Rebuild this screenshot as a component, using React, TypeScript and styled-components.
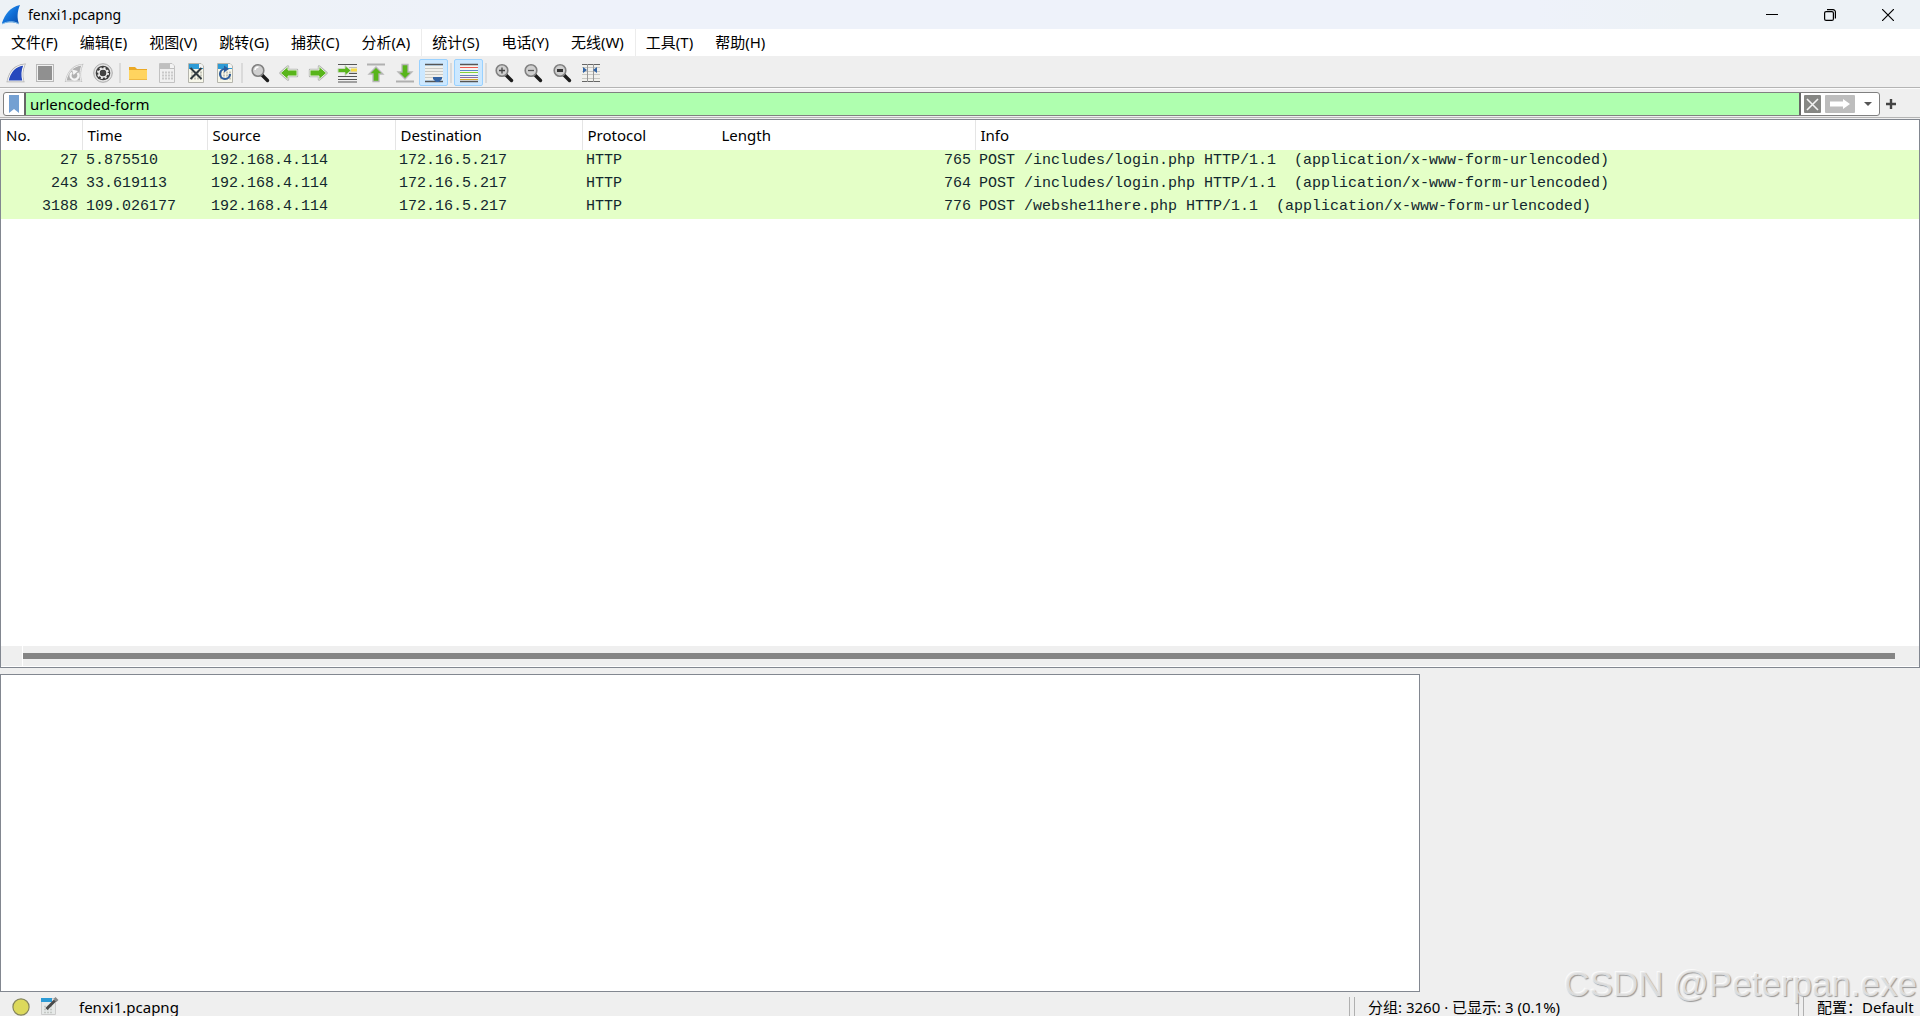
import React from "react";
import styled, { createGlobalStyle, css } from "styled-components";

const UI_FONT = `"Noto Sans", "Noto Sans CJK SC", sans-serif`;
const MONO_FONT = `"Liberation Mono", "DejaVu Sans Mono", monospace`;

const GlobalStyle = createGlobalStyle`
  *, *::before, *::after { box-sizing: border-box; }
  body { margin: 0; background: #efefef; color: #000; font: 15px/20px ${UI_FONT}; overflow: hidden; }
  button, input { font: inherit; color: inherit; margin: 0; }
  button { border: 0; background: none; padding: 0; }
  svg { display: block; flex: none; }
`;

const Window = styled.div`
  position: relative;
  display: flex;
  flex-direction: column;
  height: 100vh;
  overflow: hidden;
`;

const TitleBar = styled.header`
  display: flex;
  align-items: center;
  height: 29px;
  flex: none;
  padding-right: 3px;
  background: linear-gradient(90deg, #edf2f6 0, #eef2fa 30%, #eef2fa 80%, #edf2f6 88%);
`;

const WindowTitle = styled.h1`
  flex: 1;
  margin: 0 0 0 6px;
  font-size: 14px;
  line-height: 20px;
  font-weight: 400;
`;

const CaptionButton = styled.button`
  display: flex;
  align-items: center;
  justify-content: center;
  width: 58px;
  height: 28px;
`;

const MenuBar = styled.nav`
  display: flex;
  height: 27px;
  flex: none;
  background: #fff;
`;

const MenuButton = styled.button<{ $divided?: boolean }>`
  padding: 0 11px 2px 10px;
  white-space: nowrap;
  border-left: 1px solid ${(p) => (p.$divided ? "#ececec" : "transparent")};
`;

const ToolBar = styled.div`
  display: flex;
  align-items: center;
  height: 32px;
  flex: none;
  padding: 2px 1px 0;
  border-bottom: 1px solid #b4b4b4;
`;

const ToolButton = styled.button<{ $checked?: boolean }>`
  display: flex;
  align-items: center;
  justify-content: center;
  width: 29px;
  height: 27px;
  border: 1px solid transparent;
  border-radius: 2px;
  ${(p) =>
    p.$checked &&
    css`
      background: #cce8ff;
      border-color: #99d1ff;
    `}
`;

const ToolSeparator = styled.span`
  width: 2px;
  height: 20px;
  margin: 0 2px;
  background: #dadada;
`;

const FilterBar = styled.form`
  display: flex;
  align-items: center;
  height: 30px;
  flex: none;
  padding: 2px 18px 0 3px;
  border-top: 1px solid #fbfbfb;
  border-bottom: 1px solid #b4b4b4;
`;

const FilterBox = styled.div`
  display: flex;
  flex: 1;
  height: 24px;
  background: #fff;
  border: 1px solid #808080;
  border-radius: 3px;
  overflow: hidden;
`;

const BookmarkButton = styled.button`
  display: flex;
  align-items: center;
  justify-content: center;
  width: 20px;
`;

const FilterInput = styled.input`
  flex: 1;
  min-width: 0;
  padding: 0 4px;
  border: solid #666;
  border-width: 0 2px;
  border-radius: 0;
  background: #afffaf;
  outline: none;
`;

const FilterActions = styled.div`
  display: flex;
  align-items: center;
  gap: 4px;
  padding: 0 3px;
`;

const ActionButton = styled.button<{ $width: number; $bg?: string }>`
  display: flex;
  align-items: center;
  justify-content: center;
  width: ${(p) => p.$width}px;
  height: 18px;
  border-radius: 1px;
  background: ${(p) => p.$bg ?? "none"};
`;

const AddFilterButton = styled.button`
  display: flex;
  align-items: center;
  justify-content: center;
  width: 22px;
  height: 24px;
`;

const Panes = styled.main`
  display: flex;
  flex-direction: column;
  gap: 6px;
  flex: 1;
  min-height: 0;
  padding-top: 1px;
`;

const PacketPane = styled.section`
  display: flex;
  flex-direction: column;
  justify-content: space-between;
  flex: 547 1 0;
  min-height: 0;
  overflow: hidden;
  background: #fff;
  border: 1px solid #828790;
`;

const DetailsRow = styled.div`
  display: grid;
  grid-template-columns: 71fr 25fr;
  flex: 318 1 0;
  min-height: 0;
`;

const DetailsPane = styled.section`
  background: #fff;
  border: 1px solid #828790;
`;

const PacketTable = styled.table`
  width: 100%;
  table-layout: fixed;
  border-collapse: collapse;
`;

const Column = styled.col<{ $width?: number }>`
  width: ${(p) => (p.$width ? `${p.$width}px` : "auto")};
`;

const HeadCell = styled.th<{ $divided?: boolean }>`
  height: 30px;
  padding: 0 5px;
  font-weight: 400;
  text-align: left;
  border-right: 1px solid ${(p) => (p.$divided ? "#e5e5e5" : "transparent")};
`;

const PacketRow = styled.tr`
  background: #e4ffc7;
  color: #12272e;
`;

const Cell = styled.td<{ $end?: boolean }>`
  height: 23px;
  padding: 0 4px 1px;
  font: 15px/20px ${MONO_FONT};
  text-align: ${(p) => (p.$end ? "right" : "left")};
  white-space: pre;
`;

const ScrollBar = styled.div`
  display: flex;
  align-items: center;
  height: 21px;
  padding-right: 24px;
  background: #efefef;
  border-bottom: 1px solid #fff;
`;

const ScrollStep = styled.span`
  width: 22px;
  height: 20px;
  border-right: 1px solid #fff;
`;

const ScrollThumb = styled.span`
  flex: 1;
  height: 6px;
  background: #858585;
`;

const StatusBar = styled.footer`
  display: flex;
  height: 24px;
  flex: none;
  padding-top: 5px;
  overflow: hidden;
`;

const StatusIcons = styled.div`
  display: flex;
  gap: 10px;
  width: 79px;
  padding: 0 0 0 12px;
`;

const StatusButton = styled.button`
  height: 20px;
`;

const FileName = styled.span`
  flex: 1;
`;

const StatusText = styled.span<{ $width: number }>`
  width: ${(p) => p.$width}px;
  padding-left: 13px;
  white-space: nowrap;
`;

const Grip = styled.span`
  width: 6px;
  height: 20px;
  border: solid #b0b0b0;
  border-width: 0 1px;
`;

const Watermark = styled.div`
  position: absolute;
  right: 3px;
  bottom: 12px;
  font: 35px/40px "Liberation Sans", Arial, sans-serif;
  color: rgba(232, 232, 232, 0.85);
  text-shadow: 1px 1px 1px #999, -1px -1px 0 #fafafa;
  pointer-events: none;
  white-space: nowrap;
`;

const Svg = ({ size = 20, children }: { size?: number; children: React.ReactNode }) => (
  <svg width={size} height={size} viewBox="0 0 20 20" fill="none" aria-hidden="true">
    {children}
  </svg>
);

const FIN = "M2 18C4 9 9 3 18 2C15.500 8 15.500 13 17 18Z";

const AppFin = () => (
  <svg width="22" height="22" viewBox="0 0 22 22" aria-hidden="true">
    <defs>
      <linearGradient id="appfin" x1="0" y1="0" x2="1" y2="1">
        <stop offset="0" stopColor="#39a6f5" />
        <stop offset="0.5" stopColor="#1170d8" />
        <stop offset="1" stopColor="#0a4aa5" />
      </linearGradient>
    </defs>
    <path d="M2 19C5 10 10 3 20 1C17 8 17 14 19 20C13 17.500 8 17.500 2 20Z" fill="url(#appfin)" />
    <path d="M2 20C8 17 14 17 19 20" stroke="#8fc6ee" fill="none" />
  </svg>
);

const StartIcon = () => (
  <Svg>
    <path d={FIN} fill="#f4f4f4" stroke="#a9a9a9" strokeWidth="2.400" />
    <path d={FIN} fill="#2648bd" stroke="#f4f4f4" strokeWidth="1.200" />
  </Svg>
);

const StopIcon = () => (
  <Svg>
    <rect x="1.500" y="1.500" width="17" height="17" fill="#f0f0f0" stroke="#b8b8b8" />
    <rect x="3" y="3" width="14" height="14" fill="#909090" />
  </Svg>
);

const RestartIcon = () => (
  <Svg>
    <path d={FIN} fill="#b7b7b7" stroke="#c4c4c4" strokeWidth="2" />
    <path d={FIN} fill="#b0b0b0" stroke="#eee" strokeWidth="1" />
    <path d="M8 9.500A4 4 0 1 0 13.500 10" stroke="#f5f5f5" strokeWidth="2.200" />
    <path d="M8 6.500L14 8L9.500 12Z" fill="#f5f5f5" />
  </Svg>
);

const OptionsIcon = () => (
  <Svg>
    <circle cx="10" cy="10" r="9.300" fill="#e4e4e4" stroke="#aaa" />
    <circle cx="10" cy="10" r="7.300" fill="#3d3d3d" />
    <circle cx="10" cy="10" r="4" stroke="#eee" strokeWidth="1.500" />
    <circle cx="10" cy="10" r="5" stroke="#eee" strokeWidth="2" strokeDasharray="1.963 1.963" />
    <circle cx="10" cy="10" r="2.800" fill="#444" />
  </Svg>
);

const FolderIcon = () => (
  <Svg>
    <path d="M1 4H7L9 6H19V17H1Z" fill="#eba925" />
    <path d="M1 7H19V17H1Z" fill="#ffd45f" />
    <path d="M1 16.500H19" stroke="#efb943" />
  </Svg>
);

const FileIcon = ({ kind }: { kind: "save" | "close" | "reload" }) => {
  const on = kind !== "save";
  return (
    <Svg>
      <path d="M2.500 0.500H15L17.500 3V19.500H2.500Z" fill={on ? "#f7f7ea" : "#f0f0f0"} stroke={on ? "#b5b5ad" : "#c2c2c2"} />
      <path d="M3 1H14L17 4V6H3Z" fill={on ? "#2d9bd6" : "#bfbfbf"} />
      <path d="M13 1H15L17 3V5H13Z" fill="#f3f3f3" />
      <path d="M5 9.500H16M5 12.500H16M5 15.500H16" stroke={on ? "#c3c3b8" : "#c9c9c9"} strokeWidth="2" strokeDasharray="2 1" />
      {kind === "close" && <path d="M4.500 5L15.500 16M15.500 5L4.500 16" stroke="#303a40" strokeWidth="2" />}
      {kind === "reload" && (
        <>
          <path d="M15 11A5 5 0 1 1 10 6" stroke="#2c5c9c" strokeWidth="2.200" />
          <path d="M9 2.500L14 6L9 9.500Z" fill="#2c5c9c" />
        </>
      )}
    </Svg>
  );
};

const LensIcon = ({ mark }: { mark?: "plus" | "minus" | "one" }) => (
  <Svg>
    <path d="M12 12L17.500 17.500" stroke="#1c1c1c" strokeWidth="3.400" strokeLinecap="round" />
    <circle cx="8" cy="7.500" r="5.800" fill="#cfcfcf" stroke="#808080" strokeWidth="1.600" />
    {!mark && <path d="M5 7A3.500 3.500 0 0 1 8.500 4" stroke="#fff" strokeWidth="1.500" />}
    {mark === "plus" && <path d="M5 7.500H11M8 4.500V10.500" stroke="#444" strokeWidth="1.300" />}
    {mark === "minus" && <path d="M5 7.500H11" stroke="#555" strokeWidth="1.300" />}
    {mark === "one" && <path d="M5 7.500H11" stroke="#333" strokeWidth="3" />}
  </Svg>
);

const ARROW = "M1.500 10L9 3.500V7H18V13H9V16.500Z";

const ArrowIcon = ({ turn = 0 }: { turn?: number }) => (
  <Svg>
    <g transform={`rotate(${turn} 10 10)`}>
      <path d={ARROW} fill="#eee" stroke="#b3b3b3" strokeWidth="2.400" strokeLinejoin="round" />
      <path d={ARROW} fill="#58b51b" stroke="#e4efdc" strokeWidth="1" />
    </g>
  </Svg>
);

const GoToIcon = () => (
  <Svg>
    <path d="M1 1.500H20M1 13.500H20M1 16.500H20M1 19H20M12 10.500H20" stroke="#555" strokeWidth="1.200" />
    <path d="M12 4.500H20M12 9H20" stroke="#bbb" />
    <path d="M14 7H20" stroke="#f6dc45" strokeWidth="3" />
    <path d="M1 5.500H8V2.500L14 7.500L8 12.500V9.500H1Z" fill="#58b51b" stroke="#c9d8c0" />
  </Svg>
);

const EdgeArrowIcon = ({ down = false }: { down?: boolean }) => (
  <Svg>
    {down ? (
      <>
        <path d="M1 18.500H19" stroke="#b0b0b0" strokeWidth="2" />
        <path d="M10 16L17 9H13V1.500H7V9H3Z" fill="#58b51b" stroke="#b8b8b8" strokeWidth="1.300" />
      </>
    ) : (
      <>
        <path d="M1 1.500H19" stroke="#b0b0b0" strokeWidth="2" />
        <path d="M10 4L17 11H13V18.500H7V11H3Z" fill="#58b51b" stroke="#b8b8b8" strokeWidth="1.300" />
      </>
    )}
  </Svg>
);

const AutoScrollIcon = () => (
  <Svg>
    <path d="M1 1.500H19M1 18.500H19" stroke="#555" strokeWidth="1.300" />
    <path d="M1 3H19V17H1Z" fill="#f0f0ec" />
    <path d="M1 5.500H19M1 8.500H19M1 11.500H19M1 14.500H19" stroke="#c9c9c4" />
    <path d="M9 14H18V16L15 19H12L9 16Z" fill="#3465a4" />
  </Svg>
);

const ColorizeIcon = () => (
  <Svg>
    <path d="M1 1H19V19H1Z" fill="#f5f5f2" />
    <path d="M1 1.500H19M1 18.500H19" stroke="#555" strokeWidth="1.300" />
    <path d="M1 4.500H19" stroke="#ee5b50" />
    <path d="M1 7.500H19" stroke="#5b8bc6" />
    <path d="M1 9.500H19" stroke="#83d33c" />
    <path d="M1 12.500H19" stroke="#6583bb" />
    <path d="M1 14.500H19" stroke="#8a6aa3" />
    <path d="M1 16.500H19" stroke="#d3a72e" />
  </Svg>
);

const ResizeIcon = () => (
  <Svg>
    <path d="M1 1H19V19H1Z" fill="#f1f1ed" />
    <path d="M1 4.500H19M1 8.500H19M1 11.500H19M1 15.500H19" stroke="#c9c9c4" />
    <path d="M1 1.500H19M1 18.500H19" stroke="#666" />
    <path d="M6.500 1V19M12.500 1V19" stroke="#999" />
    <path d="M2 4V10L6 7ZM16 4L12 7L16 10Z" fill="#3465a4" />
  </Svg>
);

const NoteIcon = () => (
  <Svg>
    <path d="M1.500 1.500H15.500V17.500H1.500Z" fill="#e6e9e8" stroke="#ccc" />
    <path d="M1 1H12V5H1Z" fill="#2d9bd6" />
    <path d="M4 9.500H13M4 12.500H13M4 15.500H13" stroke="#c4c8c4" strokeDasharray="2 1" strokeWidth="1.500" />
    <path d="M6.500 12L15 3.500" stroke="#4a4a4a" strokeWidth="3" />
    <path d="M15 3.500L17 1.500" stroke="#888" strokeWidth="4" />
  </Svg>
);

type Tool = { label: string; icon: React.ReactNode; checked?: boolean };

const TOOL_GROUPS: Tool[][] = [
  [
    { label: "开始捕获", icon: <StartIcon /> },
    { label: "停止捕获", icon: <StopIcon /> },
    { label: "重新开始捕获", icon: <RestartIcon /> },
    { label: "捕获选项", icon: <OptionsIcon /> },
  ],
  [
    { label: "打开", icon: <FolderIcon /> },
    { label: "保存", icon: <FileIcon kind="save" /> },
    { label: "关闭", icon: <FileIcon kind="close" /> },
    { label: "重新加载", icon: <FileIcon kind="reload" /> },
  ],
  [
    { label: "查找分组", icon: <LensIcon /> },
    { label: "前一分组", icon: <ArrowIcon /> },
    { label: "后一分组", icon: <ArrowIcon turn={180} /> },
    { label: "转到分组", icon: <GoToIcon /> },
    { label: "首个分组", icon: <EdgeArrowIcon /> },
    { label: "最新分组", icon: <EdgeArrowIcon down /> },
    { label: "自动滚动", icon: <AutoScrollIcon />, checked: true },
  ],
  [{ label: "着色", icon: <ColorizeIcon />, checked: true }],
  [
    { label: "放大", icon: <LensIcon mark="plus" /> },
    { label: "缩小", icon: <LensIcon mark="minus" /> },
    { label: "正常大小", icon: <LensIcon mark="one" /> },
    { label: "调整列宽", icon: <ResizeIcon /> },
  ],
];

const MENUS = [
  { text: "文件(F)" },
  { text: "编辑(E)" },
  { text: "视图(V)" },
  { text: "跳转(G)" },
  { text: "捕获(C)" },
  { text: "分析(A)" },
  { text: "统计(S)", divided: true },
  { text: "电话(Y)" },
  { text: "无线(W)" },
  { text: "工具(T)", divided: true },
  { text: "帮助(H)" },
];

const COLUMNS = [
  { name: "No.", width: 81, divided: true, end: true },
  { name: "Time", width: 125, divided: true },
  { name: "Source", width: 188, divided: true },
  { name: "Destination", width: 187, divided: true },
  { name: "Protocol", width: 134 },
  { name: "Length", width: 259, divided: true, end: true },
  { name: "Info" },
];

const PACKETS = [
  ["27", "5.875510", "192.168.4.114", "172.16.5.217", "HTTP", "765", "POST /includes/login.php HTTP/1.1  (application/x-www-form-urlencoded)"],
  ["243", "33.619113", "192.168.4.114", "172.16.5.217", "HTTP", "764", "POST /includes/login.php HTTP/1.1  (application/x-www-form-urlencoded)"],
  ["3188", "109.026177", "192.168.4.114", "172.16.5.217", "HTTP", "776", "POST /webshe11here.php HTTP/1.1  (application/x-www-form-urlencoded)"],
];

export default function App() {
  return (
    <Window>
      <GlobalStyle />
      <TitleBar>
        <AppFin />
        <WindowTitle>fenxi1.pcapng</WindowTitle>
        <CaptionButton aria-label="最小化">
          <svg width="12" height="12" viewBox="0 0 12 12"><path d="M0 5.500H12" stroke="#000" /></svg>
        </CaptionButton>
        <CaptionButton aria-label="还原">
          <svg width="12" height="12" viewBox="0 0 12 12" fill="none" stroke="#000" strokeWidth="1.200">
            <rect x="0.600" y="2.600" width="8.800" height="8.800" rx="1.500" />
            <path d="M3 0.600H9A2.400 2.400 0 0 1 11.400 3V9.500" />
          </svg>
        </CaptionButton>
        <CaptionButton aria-label="关闭窗口">
          <svg width="12" height="12" viewBox="0 0 12 12"><path d="M0 0L12 12M12 0L0 12" stroke="#000" strokeWidth="1.200" /></svg>
        </CaptionButton>
      </TitleBar>

      <MenuBar>
        {MENUS.map((m) => (
          <MenuButton key={m.text} $divided={m.divided}>{m.text}</MenuButton>
        ))}
      </MenuBar>

      <ToolBar role="toolbar">
        {TOOL_GROUPS.map((group, i) => (
          <React.Fragment key={i}>
            {i > 0 && <ToolSeparator />}
            {group.map((t) => (
              <ToolButton key={t.label} aria-label={t.label} $checked={t.checked}>{t.icon}</ToolButton>
            ))}
          </React.Fragment>
        ))}
      </ToolBar>

      <FilterBar onSubmit={(e) => e.preventDefault()}>
        <FilterBox>
          <BookmarkButton type="button" aria-label="书签">
            <svg width="12" height="18" viewBox="0 0 12 18"><path d="M1 0H11V18L6 14L1 18Z" fill="#74a0d2" /></svg>
          </BookmarkButton>
          <FilterInput aria-label="显示过滤器" defaultValue="urlencoded-form" spellCheck={false} />
          <FilterActions>
            <ActionButton type="button" aria-label="清除" $width={17} $bg="#868784">
              <svg width="13" height="13" viewBox="0 0 13 13"><path d="M1 1L12 12M12 1L1 12" stroke="#f2f2f2" strokeWidth="1.600" /></svg>
            </ActionButton>
            <ActionButton type="submit" aria-label="应用" $width={30} $bg="#bdbdbd">
              <svg width="20" height="10" viewBox="0 0 20 10"><path d="M0 2.500H13V0L20 5L13 10V7.500H0Z" fill="#fff" /></svg>
            </ActionButton>
            <ActionButton type="button" aria-label="历史记录" $width={17}>
              <svg width="8" height="4" viewBox="0 0 8 4"><path d="M0 0H8L4 4Z" fill="#555" /></svg>
            </ActionButton>
          </FilterActions>
        </FilterBox>
        <AddFilterButton type="button" aria-label="添加过滤器">
          <svg width="10" height="10" viewBox="0 0 10 10"><path d="M0 5H10M5 0V10" stroke="#444" strokeWidth="2.400" /></svg>
        </AddFilterButton>
      </FilterBar>

      <Panes>
        <PacketPane>
          <PacketTable>
            <colgroup>
              {COLUMNS.map((c) => <Column key={c.name} $width={c.width} />)}
            </colgroup>
            <thead>
              <tr>
                {COLUMNS.map((c) => <HeadCell key={c.name} $divided={c.divided}>{c.name}</HeadCell>)}
              </tr>
            </thead>
            <tbody>
              {PACKETS.map((row) => (
                <PacketRow key={row[0]}>
                  {row.map((value, i) => <Cell key={i} $end={COLUMNS[i].end}>{value}</Cell>)}
                </PacketRow>
              ))}
            </tbody>
          </PacketTable>
          <ScrollBar>
            <ScrollStep />
            <ScrollThumb />
          </ScrollBar>
        </PacketPane>
        <DetailsRow>
          <DetailsPane />
        </DetailsRow>
      </Panes>

      <StatusBar>
        <StatusIcons>
          <StatusButton aria-label="专家信息">
            <Svg size={18}><circle cx="10" cy="10" r="9" fill="#dcd95c" stroke="#85855c" strokeWidth="1.300" /></Svg>
          </StatusButton>
          <StatusButton aria-label="捕获文件注释"><NoteIcon /></StatusButton>
        </StatusIcons>
        <FileName>fenxi1.pcapng</FileName>
        <Grip />
        <StatusText $width={443}>分组: 3260 · 已显示: 3 (0.1%)</StatusText>
        <Grip />
        <StatusText $width={116}>配置：Default</StatusText>
      </StatusBar>

      <Watermark>CSDN @Peterpan.exe</Watermark>
    </Window>
  );
}
